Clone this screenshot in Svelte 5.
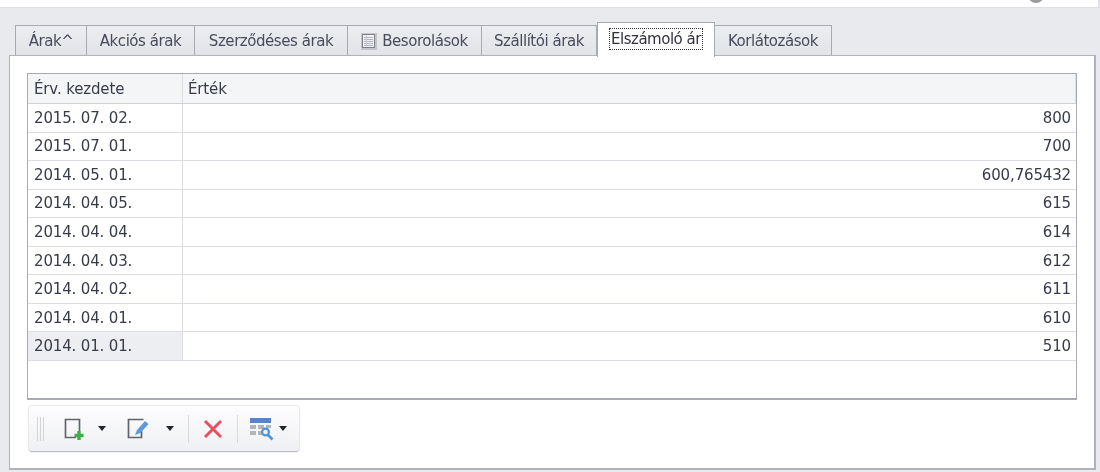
<script>
  const tabs = [
    { label: 'Árak^', width: 72 },
    { label: 'Akciós árak', width: 108 },
    { label: 'Szerződéses árak', width: 153 },
    { label: 'Besorolások', width: 134, icon: true },
    { label: 'Szállítói árak', width: 115 },
    { label: 'Elszámoló ár', width: 118, active: true },
    { label: 'Korlátozások', width: 117 }
  ];

  const rows = [
    ['2015. 07. 02.', '800'],
    ['2015. 07. 01.', '700'],
    ['2014. 05. 01.', '600,765432'],
    ['2014. 04. 05.', '615'],
    ['2014. 04. 04.', '614'],
    ['2014. 04. 03.', '612'],
    ['2014. 04. 02.', '611'],
    ['2014. 04. 01.', '610'],
    ['2014. 01. 01.', '510']
  ];
</script>

<div class="page">
  <div class="top-strip"><span class="knob"></span></div>

  <div class="tabs">
    {#each tabs as tab}
      <div class="tab" class:active={tab.active} style="width: {tab.width}px">
        {#if tab.icon}
          <svg class="tab-icon" width="16" height="17" viewBox="0 0 16 17">
            <rect x="0" y="0" width="16" height="17" fill="#c4c6cc" />
            <rect x="1.5" y="1.5" width="12" height="13" fill="#eff0f3" stroke="#7f8189" />
            <path d="M3 4.5h9M3 6.5h9M3 8.5h9M3 10.5h9M3 12.5h9" stroke="#b4b7c0" />
            <path d="M5.5 2.5v11" stroke="#c6c9d0" />
          </svg>
        {/if}
        <span class="tab-label">{tab.label}</span>
      </div>
    {/each}
  </div>

  <div class="panel">
    <div class="grid">
      <div class="row head">
        <div class="cell date">Érv. kezdete</div>
        <div class="cell">Érték</div>
      </div>
      {#each rows as row, i}
        <div class="row" class:selected={i === rows.length - 1}>
          <div class="cell date">{row[0]}</div>
          <div class="cell value">{row[1]}</div>
        </div>
      {/each}
    </div>

    <div class="toolbar">
      <span class="grip"></span>

      <svg class="ico new" width="20" height="24" viewBox="0 0 20 24">
        <path d="M12 20.5H1.5V2.5H15.5V14" fill="none" stroke="#62656d" stroke-width="1.7" />
        <path d="M15 14v9M10.5 18.5h9" stroke="#3fae49" stroke-width="3.4" />
      </svg>
      <span class="caret first"></span>

      <svg class="ico edit" width="24" height="24" viewBox="0 0 24 24">
        <path d="M16.5 2.5H1.5V20.5H14.5V14" fill="none" stroke="#62656d" stroke-width="1.7" />
        <path d="M8 18l2-5 8-9 3.5 3-8 9z" fill="#5b9bdc" />
      </svg>
      <span class="caret second"></span>

      <span class="sep"></span>

      <svg class="ico del" width="20" height="20" viewBox="0 0 20 20">
        <path d="M2 2l16 16M18 2L2 18" stroke="#ea4f5f" stroke-width="3" />
      </svg>

      <span class="sep"></span>

      <svg class="ico cfg" width="26" height="26" viewBox="0 0 26 26">
        <rect x="1" y="1" width="21" height="5" fill="#5b84c4" />
        <path d="M1 8h6v4H1zM9 8h6v4H9zM1 14h6v4H1zM9 14h5v4H9zM17 8h5v3h-5z" fill="#b3b5ba" />
        <circle cx="16.5" cy="15" r="3.4" fill="none" stroke="#4f93d8" stroke-width="2.2" />
        <path d="M18.5 17.5l5 5" stroke="#4f93d8" stroke-width="2.6" />
      </svg>
      <span class="caret third"></span>
    </div>
  </div>
</div>

<style>
  :global(body) {
    margin: 0;
    background: #e9eaee;
  }

  .page {
    width: 1100px;
    height: 472px;
    overflow: hidden;
    background: #e9eaee;
    font-family: "DejaVu Sans", sans-serif;
    font-size: 15px;
    color: #383b49;
    filter: blur(0.45px);
  }

  .top-strip {
    height: 7px;
    background: #fff;
    border-bottom: 1px solid #dfe0e4;
    border-right: 2px solid #e0e1e5;
    overflow: hidden;
    display: flex;
    justify-content: flex-end;
    padding-right: 54px;
  }

  .knob {
    width: 16px;
    height: 16px;
    margin-top: -13px;
    border-radius: 50%;
    background: #9b9b9b;
  }

  .tabs {
    display: flex;
    align-items: flex-end;
    height: 47px;
    padding-left: 15px;
  }

  .tab {
    box-sizing: border-box;
    height: 30px;
    padding-top: 1px;
    display: flex;
    align-items: center;
    justify-content: center;
    gap: 5px;
    border: 1px solid #a7aab3;
    border-bottom: none;
    border-left-width: 0;
    background: linear-gradient(#ecedf0, #e3e4e9);
    color: #474b5c;
    letter-spacing: -0.45px;
  }

  .tab:first-child {
    border-left-width: 1px;
  }

  .tab.active {
    position: relative;
    z-index: 1;
    height: 35px;
    margin-bottom: -2px;
    border-left-width: 1px;
    background: #fff;
    color: #30323f;
    padding-top: 0;
    padding-bottom: 3px;
  }

  .tab.active .tab-label {
    outline: 1px dotted #33343c;
    padding: 1px;
    letter-spacing: -0.5px;
  }

  .panel {
    box-sizing: border-box;
    width: 1087px;
    height: 415px;
    margin-left: 9px;
    padding: 17px 17px 0;
    background: #fff;
    border: 1px solid #b0b2bb;
    border-right-width: 2px;
    border-bottom-width: 2px;
  }

  .grid {
    box-sizing: border-box;
    height: 327px;
    width: 1050px;
    border: 1px solid #a9abb4;
    border-bottom-width: 2px;
  }

  .row {
    display: grid;
    grid-template-columns: 155px 1fr;
    height: 28.55px;
    box-sizing: border-box;
    border-bottom: 1px solid #dcdde2;
  }

  .row.head {
    height: 30px;
    background: #f4f5f7;
    border-bottom: 1px solid #cfd1d7;
  }

  .cell {
    display: flex;
    align-items: center;
    padding: 0 5px;
    letter-spacing: -0.15px;
    border-right: 1px solid #dcdde2;
  }

  .cell.date {
    padding-left: 6px;
  }

  .cell.value {
    justify-content: flex-end;
    border-right: none;
  }

  .selected .date {
    background: #eceef1;
  }

  .toolbar {
    box-sizing: border-box;
    display: flex;
    align-items: center;
    width: 270px;
    height: 45px;
    margin: 6px 0 0 2px;
    padding-left: 8px;
    border-radius: 3px;
    background: linear-gradient(#fdfdfe, #eff0f3);
    box-shadow: 0 0 2px #b4b6be, 0 1px 1px #b4b6be;
  }

  .grip {
    width: 7px;
    height: 24px;
    background: repeating-linear-gradient(90deg, #d3d4d9 0 1px, transparent 1px 3px);
  }

  .ico {
    flex: none;
  }

  .ico.new {
    margin-left: 20px;
  }

  .ico.edit {
    margin-left: 21px;
  }

  .ico.del {
    margin-left: 14px;
  }

  .ico.cfg {
    margin-left: 11px;
    margin-top: 2px;
  }

  .caret {
    flex: none;
    width: 0;
    height: 0;
    border-left: 4px solid transparent;
    border-right: 4px solid transparent;
    border-top: 5px solid #23252b;
  }

  .caret.first {
    margin-left: 14px;
  }

  .caret.second {
    margin-left: 15px;
  }

  .caret.third {
    margin-left: 4px;
  }

  .sep {
    width: 1px;
    height: 28px;
    margin-left: 14px;
    background: #d8d9de;
  }
</style>
